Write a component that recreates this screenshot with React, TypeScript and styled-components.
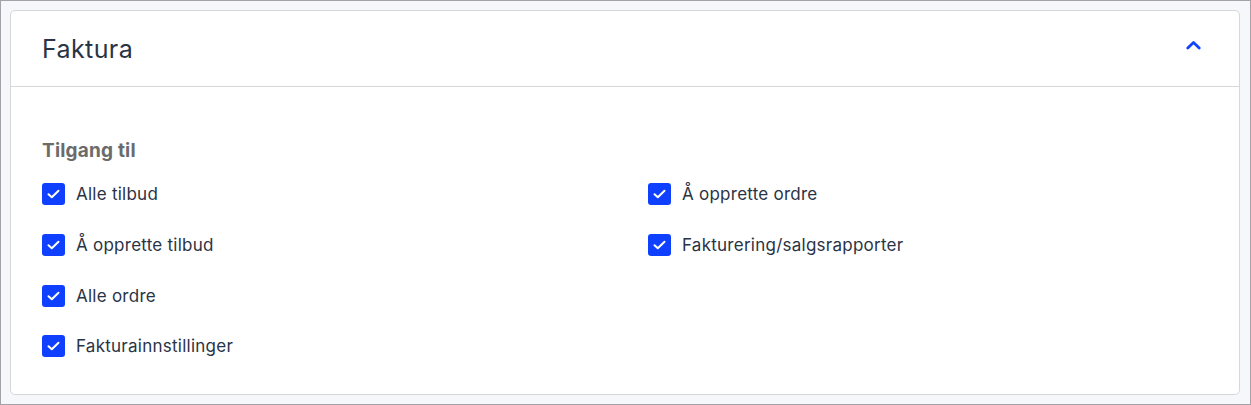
import React from "react";
import styled, { createGlobalStyle } from "styled-components";

const Global = createGlobalStyle`
  html, body { margin: 0; padding: 0; }
  body {
    font-family: Inter, "Noto Sans", sans-serif;
    background: #ffffff;
  }
  * { box-sizing: border-box; }
`;

const Frame = styled.div`
  width: 1251px;
  height: 405px;
  border: 1px solid #a3a3a7;
  background: #f6f7fb;
  padding: 9px 10px 9px 9px;
`;

const Card = styled.section`
  background: #ffffff;
  border: 1px solid #d6d7db;
  border-radius: 5px;
  height: 100%;
  display: flex;
  flex-direction: column;
`;

const Header = styled.header`
  height: 76px;
  display: flex;
  align-items: center;
  justify-content: space-between;
  padding: 0 38px 0 31px;
  border-bottom: 1px solid #d6d7db;
`;

const Title = styled.h2`
  margin: 0;
  font-size: 25px;
  font-weight: 400;
  color: #2a3346;
  letter-spacing: 0.4px;
`;

const Toggle = styled.button`
  border: 0;
  background: transparent;
  padding: 0;
  margin-bottom: 7px;
  display: flex;
  color: #1443ff;
  cursor: pointer;
`;

const Body = styled.div`
  padding: 52px 30px 0 31px;
`;

const GroupTitle = styled.h3`
  margin: 0 0 21px 0;
  font-size: 19px;
  font-weight: 700;
  color: #6b6b6b;
  letter-spacing: 0.2px;
`;

const Grid = styled.div`
  display: grid;
  grid-template-columns: 606px 1fr;
  grid-template-rows: 51px 51px 50px 51px;
`;

const Item = styled.label<{ $col: number; $row: number }>`
  grid-column: ${(p) => p.$col};
  grid-row: ${(p) => p.$row};
  display: flex;
  align-items: flex-start;
  gap: 11px;
  font-size: 17px;
  letter-spacing: 0.25px;
  color: #2a3346;
  line-height: 22px;
`;

const Box = styled.span`
  width: 23px;
  height: 22px;
  border-radius: 3px;
  background: #1040ff;
  display: flex;
  align-items: center;
  justify-content: center;
  flex-shrink: 0;
`;

const Check = () => (
  <svg width="13" height="10" viewBox="0 0 13 10" fill="none">
    <path d="M1.5 5.2 L4.8 8.3 L11.5 1.7" stroke="#fff" strokeWidth="2" strokeLinecap="round" strokeLinejoin="round" />
  </svg>
);

const Chevron = () => (
  <svg width="15" height="10" viewBox="0 0 15 10" fill="none">
    <path d="M1.8 8 L7.5 2.4 L13.2 8" stroke="currentColor" strokeWidth="2.8" strokeLinecap="round" strokeLinejoin="round" />
  </svg>
);

const items = [
  { label: "Alle tilbud", col: 1, row: 1 },
  { label: "Å opprette tilbud", col: 1, row: 2 },
  { label: "Alle ordre", col: 1, row: 3 },
  { label: "Fakturainnstillinger", col: 1, row: 4 },
  { label: "Å opprette ordre", col: 2, row: 1 },
  { label: "Fakturering/salgsrapporter", col: 2, row: 2 },
];

export default function App() {
  return (
    <>
      <Global />
      <Frame>
        <Card>
          <Header>
            <Title>Faktura</Title>
            <Toggle aria-label="Skjul">
              <Chevron />
            </Toggle>
          </Header>
          <Body>
            <GroupTitle>Tilgang til</GroupTitle>
            <Grid>
              {items.map((it) => (
                <Item key={it.label} $col={it.col} $row={it.row}>
                  <Box>
                    <Check />
                  </Box>
                  {it.label}
                </Item>
              ))}
            </Grid>
          </Body>
        </Card>
      </Frame>
    </>
  );
}
